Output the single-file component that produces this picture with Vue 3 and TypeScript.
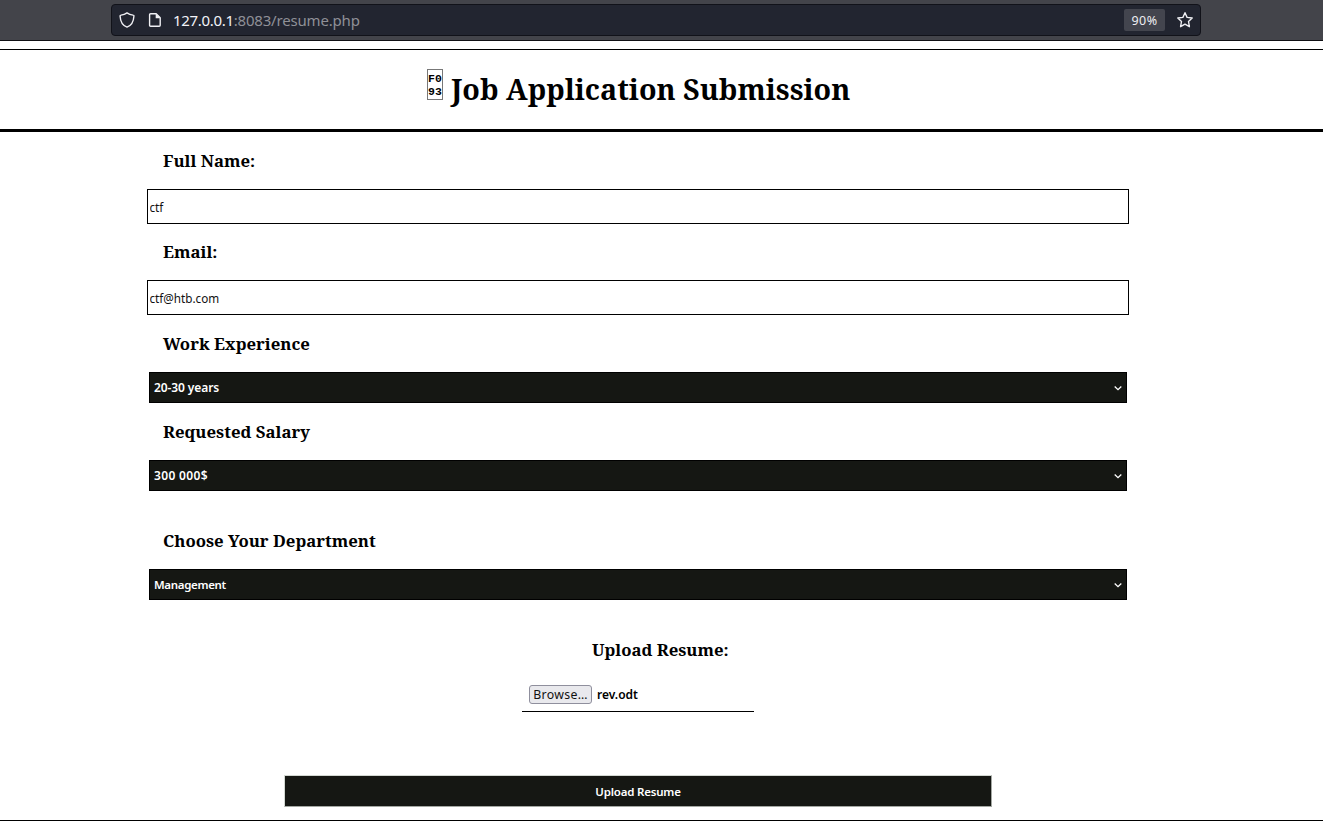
<script setup lang="ts">
import { ref } from 'vue'

interface SelectField {
  label: string
  key: string
  value: string
}

const fullName = ref('ctf')
const email = ref('ctf@htb.com')
const selects: SelectField[] = [
  { label: 'Work Experience', key: 'work', value: '20-30 years' },
  { label: 'Requested Salary', key: 'salary', value: '300 000$' },
  { label: 'Choose Your Department', key: 'department', value: 'Management' },
]
</script>

<template>
  <div class="page">
    <header class="toolbar">
      <div class="urlbar">
        <svg class="icon" width="16" height="16" viewBox="0 0 16 16">
          <path d="M8 .9c1.700 1.300 3.700 2 6 2.200.700 0 1 .500.900 1.100-.300 5.300-2.200 9.200-6.900 10.900C3.300 13.400 1.400 9.500 1.100 4.200c0-.600.300-1.100.900-1.100C4.300 2.900 6.300 2.200 8 .9z" />
        </svg>
        <svg class="icon doc" width="16" height="16" viewBox="0 0 16 16">
          <path d="M3.600 1.700h5.600l4 4v7.600q0 1-1 1H3.600q-1 0-1-1V2.700q0-1 1-1z" />
          <path class="solid" d="M8.700 1.500v4.800h4.800z" />
        </svg>
        <span class="url"><b>127.0.0.1</b>:8083/resume.php</span>
        <span class="zoom">90%</span>
        <svg class="icon star" width="18" height="18" viewBox="0 0 18 18">
          <path d="M9 1.700l2.100 4.700 5.100.6-3.700 3.500.9 5.200L9 13.200l-4.400 2.500.9-5.200L1.800 7l5.100-.6z" />
        </svg>
      </div>
    </header>

    <div class="banner">
      <span class="missing"><span>F0</span><span>93</span></span>
      <h1>Job Application Submission</h1>
    </div>

    <main>
      <div class="field name">
        <label>Full Name:</label>
        <input v-model="fullName" type="text" />
      </div>
      <div class="field email">
        <label>Email:</label>
        <input v-model="email" type="text" />
      </div>
      <div v-for="s in selects" :key="s.key" class="field" :class="s.key">
        <label>{{ s.label }}</label>
        <div class="select">
          <span>{{ s.value }}</span>
          <svg width="10" height="10" viewBox="0 0 10 10"><path d="M1.700 3.500L5 6.700l3.300-3.200" /></svg>
        </div>
      </div>
      <div class="upload">
        <label>Upload Resume:</label>
        <div class="file">
          <button class="browse" type="button">Browse…</button>
          <span>rev.odt</span>
        </div>
      </div>
      <button class="submit" type="button">Upload Resume</button>
    </main>
  </div>
</template>

<style>
body {
  margin: 0;
  background: #fff;
  overflow: hidden;
}
</style>

<style scoped>
* {
  box-sizing: border-box;
}
.page {
  position: relative;
  width: 1323px;
  height: 824px;
  color: #000;
  background: #fff;
  font-family: 'Noto Sans', sans-serif;
}
.page::after {
  position: absolute;
  top: 820px;
  left: 0;
  width: 100%;
  border-top: 1px solid #000;
  content: '';
}
.toolbar {
  height: 41px;
  padding: 4px 122px 0 111px;
  background: #43444a;
  border-bottom: 1px solid #101014;
}
.urlbar {
  display: flex;
  align-items: center;
  height: 32px;
  padding: 0 6px 0 7px;
  background: #222530;
  border: 1px solid #111219;
  border-radius: 4px;
}
.icon {
  flex: none;
  fill: none;
  stroke: #f0f0f4;
  stroke-width: 1.4;
  stroke-linejoin: round;
}
.doc {
  margin-left: 12px;
}
.solid {
  fill: #f0f0f4;
  stroke: none;
}
.url {
  margin-left: 10px;
  color: #8f9097;
  font-size: 15px;
  letter-spacing: -0.180px;
  line-height: 30px;
}
.url b {
  color: #f3f3f8;
  font-weight: 400;
  letter-spacing: -0.320px;
}
.zoom {
  width: 41px;
  height: 22px;
  margin-left: auto;
  border-radius: 2px;
  background: #43454e;
  color: #eeeef2;
  font-size: 12.500px;
  letter-spacing: 0.400px;
  line-height: 23px;
  text-align: center;
}
.star {
  margin-left: 11px;
}
.banner {
  display: flex;
  height: 83px;
  margin-top: 8px;
  padding-left: 427px;
  border-top: 1px solid #000;
  border-bottom: 3px solid #000;
}
.missing {
  display: flex;
  flex-direction: column;
  width: 16px;
  height: 31px;
  margin-top: 19px;
  padding-top: 2px;
  border: 1px solid #777;
  font: bold 11.500px/13px 'Liberation Mono', monospace;
  white-space: nowrap;
}
h1,
label {
  font-family: 'Noto Serif', 'DejaVu Serif Condensed', 'DejaVu Serif', serif;
  font-weight: 700;
}
h1 {
  margin: 0 0 0 8px;
  font-size: 28.700px;
  line-height: 77px;
  white-space: nowrap;
}
main {
  display: flex;
  flex-direction: column;
  width: 982px;
  margin-left: 147px;
}
label {
  display: block;
  height: 56px;
  padding-left: 16px;
  font-size: 16.750px;
  line-height: 56px;
  white-space: nowrap;
}
.name {
  margin-top: 1px;
}
.work,
.salary {
  margin-top: 1px;
}
.department {
  margin-top: 22px;
}
input {
  display: block;
  width: 982px;
  height: 35px;
  padding: 0 1px 0 1.500px;
  border: 1px solid #000;
  outline: none;
  background: #fff;
  color: #111;
  font: 11.700px 'Noto Sans', sans-serif;
}
.select {
  display: flex;
  align-items: center;
  justify-content: space-between;
  width: 978px;
  height: 31px;
  margin-left: 2px;
  padding: 0 3px 0 4px;
  border: 1px solid #000;
  background: #151713;
  color: #fff;
  font-size: 12px;
  font-weight: 600;
}
.work .select {
  letter-spacing: -0.100px;
}
.salary .select {
  letter-spacing: 0.350px;
}
.department .select {
  font-size: 11.500px;
  letter-spacing: -0.330px;
}
.select path {
  fill: none;
  stroke: #fff;
  stroke-width: 1.3;
}
.upload {
  width: 232px;
  margin: 22px 0 0 375px;
}
.upload label {
  padding-left: 70px;
}
.file {
  display: flex;
  height: 34px;
  padding: 7px 0 0 7px;
  border-bottom: 1px solid #000;
  font-size: 12px;
  font-weight: 600;
  line-height: 20px;
}
.browse {
  width: 63px;
  height: 19px;
  margin-right: 5px;
  padding: 0;
  border: 1px solid #8f8f9d;
  border-radius: 3px;
  background: #e9e9ed;
  color: #111;
  font: 12.300px/16px 'Noto Sans', sans-serif;
  letter-spacing: 0.350px;
}
.submit {
  width: 708px;
  height: 32px;
  margin: 63px 0 0 137px;
  padding: 0;
  border: 1px solid;
  border-color: #d3d8d2 #a4a8a3 #a4a8a3 #d3d8d2;
  background: #151713;
  color: #fff;
  font: 600 11.500px 'Noto Sans', sans-serif;
  letter-spacing: -0.200px;
}
</style>
